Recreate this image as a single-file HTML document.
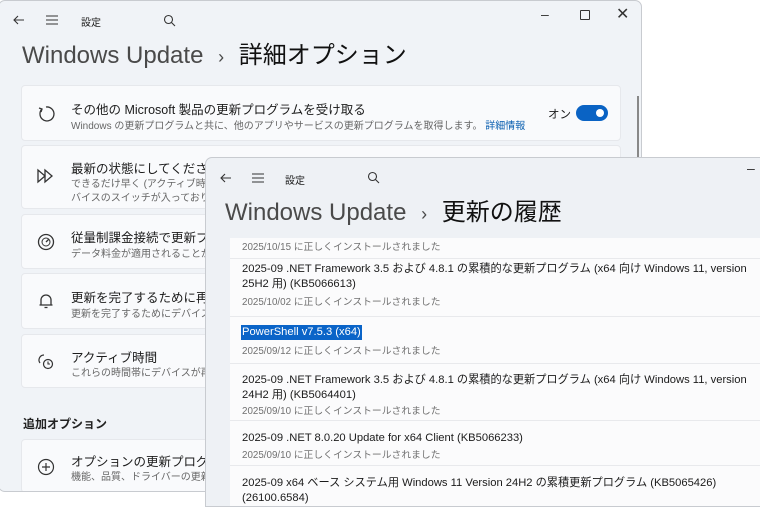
<!DOCTYPE html>
<html><head><meta charset="utf-8"><style>
*{margin:0;padding:0;box-sizing:border-box}
body{width:760px;height:499px;overflow:hidden;background:#fff;font-family:"Liberation Sans","Noto Sans CJK JP",sans-serif;position:relative;color:#1b1b1b}
.win{position:absolute;background:#f0f3f7;border:1px solid #c8cbd0;border-radius:7px;overflow:hidden}
.abs{position:absolute}
.card{position:absolute;left:22px;width:600px;background:#f9fafc;border-radius:4px;border:1px solid #e6e8ec}
.t{position:absolute;left:49px;font-size:12.5px;color:#1b1b1b;white-space:nowrap}
.s{position:absolute;left:49px;font-size:10px;color:#666;white-space:nowrap}
.ic{position:absolute;left:14px}
.row{position:absolute;left:24px;width:540px;border-bottom:1px solid #e8e9ec}
.rt{position:absolute;left:12px;font-size:11.2px;color:#1b1b1b;white-space:nowrap;line-height:15px}
.rd{position:absolute;left:12px;font-size:9.8px;color:#707070;white-space:nowrap}
</style></head><body>
<div class="win" style="left:-2px;top:0;width:644px;height:492px">
 <svg class="abs" style="left:12px;top:12px" width="16" height="14"><path d="M13 7H3M7 3L3 7L7 11" stroke="#333" fill="none" stroke-width="1.1"/></svg>
 <svg class="abs" style="left:46px;top:13px" width="14" height="12"><path d="M1 2H13M1 6H13M1 10H13" stroke="#333" stroke-width="1.1"/></svg>
 <div class="abs" style="left:82px;top:13px;font-size:10px">設定</div>
 <svg class="abs" style="left:164px;top:13px" width="13" height="13"><circle cx="5.5" cy="5.5" r="4" stroke="#333" fill="none" stroke-width="1.1"/><path d="M8.5 8.5L12 12" stroke="#333" stroke-width="1.1"/></svg>
 <div class="abs" style="left:542px;top:5px;font-size:14px;color:#333">–</div>
 <div class="abs" style="left:581px;top:9px;width:10px;height:10px;border:1.2px solid #333;border-radius:1px"></div>
 <div class="abs" style="left:617px;top:3px;font-size:16px;color:#333">✕</div>
 <div class="abs" style="left:23px;top:34px;font-size:24px;color:#4a4a4a;white-space:nowrap">Windows Update <span style="font-size:18px;margin:0 8px">›</span> <span style="color:#111">詳細オプション</span></div>
 <div class="abs" style="left:638px;top:95px;width:2px;height:70px;background:#888"></div>
 <div class="card" style="top:84px;height:56px">
  <svg class="ic" style="top:18px" width="20" height="20"><path d="M6 5A7 7 0 1 0 10 3" stroke="#333" fill="none" stroke-width="1.3"/><path d="M3 4L6 5L5 8" stroke="#333" fill="none" stroke-width="1.3"/></svg>
  <div class="t" style="top:13px">その他の Microsoft 製品の更新プログラムを受け取る</div>
  <div class="s" style="top:31px">Windows の更新プログラムと共に、他のアプリやサービスの更新プログラムを取得します。 <span style="color:#0a5fb0">詳細情報</span></div>
  <div class="abs" style="left:526px;top:20px;font-size:11.5px">オン</div>
  <div class="abs" style="left:554px;top:19px;width:32px;height:16px;border-radius:8px;background:#0a63c4"><div class="abs" style="left:20px;top:4px;width:8px;height:8px;border-radius:50%;background:#fff"></div></div>
 </div>
 <div class="card" style="top:144px;height:64px">
  <svg class="ic" style="top:22px" width="20" height="16"><path d="M2 2V14L9 8Z M9 2V14L16 8Z" stroke="#333" fill="none" stroke-width="1.3"/></svg>
  <div class="t" style="top:12px">最新の状態にしてください</div>
  <div class="s" style="top:29px">できるだけ早く (アクティブ時間中で</div>
  <div class="s" style="top:43px">バイスのスイッチが入っており電源に</div>
 </div>
 <div class="card" style="top:213px;height:55px">
  <svg class="ic" style="top:17px" width="20" height="20"><circle cx="10" cy="10" r="7.5" stroke="#333" fill="none" stroke-width="1.3"/><circle cx="10" cy="10" r="4" stroke="#333" fill="none" stroke-width="1"/><path d="M10 10L13 7" stroke="#333" stroke-width="1.3"/></svg>
  <div class="t" style="top:12px">従量制課金接続で更新プログ</div>
  <div class="s" style="top:30px">データ料金が適用されることがありま</div>
 </div>
 <div class="card" style="top:272px;height:56px">
  <svg class="ic" style="top:17px" width="20" height="20"><path d="M5 14V9A5 5 0 0 1 15 9V14H5ZM3.5 14H16.5M8.5 16.5H11.5" stroke="#333" fill="none" stroke-width="1.3"/></svg>
  <div class="t" style="top:13px">更新を完了するために再起動</div>
  <div class="s" style="top:31px">更新を完了するためにデバイスの再</div>
 </div>
 <div class="card" style="top:333px;height:54px">
  <svg class="ic" style="top:17px" width="20" height="20"><path d="M8 3A5 5 0 0 0 4 11" stroke="#333" fill="none" stroke-width="1.2"/><circle cx="12" cy="12" r="4.5" stroke="#333" fill="none" stroke-width="1.2"/><path d="M12 9.5V12H14" stroke="#333" fill="none" stroke-width="1.1"/></svg>
  <div class="t" style="top:12px">アクティブ時間</div>
  <div class="s" style="top:29px">これらの時間帯にデバイスが再起動</div>
 </div>
 <div class="abs" style="left:24px;top:414px;font-size:12px;font-weight:bold;color:#222">追加オプション</div>
 <div class="card" style="top:438px;height:54px">
  <svg class="ic" style="top:17px" width="20" height="20"><circle cx="10" cy="10" r="7.5" stroke="#333" fill="none" stroke-width="1.2"/><path d="M10 6V14M6 10H14" stroke="#333" stroke-width="1.2"/></svg>
  <div class="t" style="top:11px">オプションの更新プログラム</div>
  <div class="s" style="top:28px">機能、品質、ドライバーの更新プログ</div>
 </div>
</div>

<div class="win" style="left:205px;top:157px;width:570px;height:350px;background:#eef1f5;border-radius:7px 0 0 0">
 <svg class="abs" style="left:12px;top:13px" width="16" height="14"><path d="M13 7H3M7 3L3 7L7 11" stroke="#333" fill="none" stroke-width="1.1"/></svg>
 <svg class="abs" style="left:45px;top:14px" width="14" height="12"><path d="M1 2H13M1 6H13M1 10H13" stroke="#333" stroke-width="1.1"/></svg>
 <div class="abs" style="left:79px;top:14px;font-size:10px">設定</div>
 <svg class="abs" style="left:161px;top:13px" width="13" height="13"><circle cx="5.5" cy="5.5" r="4" stroke="#333" fill="none" stroke-width="1.1"/><path d="M8.5 8.5L12 12" stroke="#333" stroke-width="1.1"/></svg>
 <div class="abs" style="left:541px;top:2px;font-size:14px;color:#333">–</div>
 <div class="abs" style="left:19px;top:34px;font-size:24px;color:#4a4a4a;white-space:nowrap">Windows Update <span style="font-size:18px;margin:0 8px">›</span> <span style="color:#111">更新の履歴</span></div>
 <div class="abs" style="left:24px;top:80px;width:550px;height:280px;background:#fbfbfc"></div>
 <div class="row" style="top:80px;height:21px"><div class="rd" style="top:1px">2025/10/15 に正しくインストールされました</div></div>
 <div class="row" style="top:101px;height:58px"><div class="rt" style="top:3px">2025-09 .NET Framework 3.5 および 4.8.1 の累積的な更新プログラム (x64 向け Windows 11, version<br>25H2 用) (KB5066613)</div><div class="rd" style="top:35px">2025/10/02 に正しくインストールされました</div></div>
 <div class="row" style="top:159px;height:47px"><div class="rt" style="top:8px;background:#0a64c8;color:#fff;padding:0 1px;left:11px">PowerShell v7.5.3 (x64)</div><div class="rd" style="top:26px">2025/09/12 に正しくインストールされました</div></div>
 <div class="row" style="top:206px;height:57px"><div class="rt" style="top:9px">2025-09 .NET Framework 3.5 および 4.8.1 の累積的な更新プログラム (x64 向け Windows 11, version<br>24H2 用) (KB5064401)</div><div class="rd" style="top:39px">2025/09/10 に正しくインストールされました</div></div>
 <div class="row" style="top:263px;height:45px"><div class="rt" style="top:10px">2025-09 .NET 8.0.20 Update for x64 Client (KB5066233)</div><div class="rd" style="top:26px">2025/09/10 に正しくインストールされました</div></div>
 <div class="row" style="top:308px;height:50px;border:none"><div class="rt" style="top:10px">2025-09 x64 ベース システム用 Windows 11 Version 24H2 の累積更新プログラム (KB5065426)<br>(26100.6584)</div></div>
</div>
</body></html>
